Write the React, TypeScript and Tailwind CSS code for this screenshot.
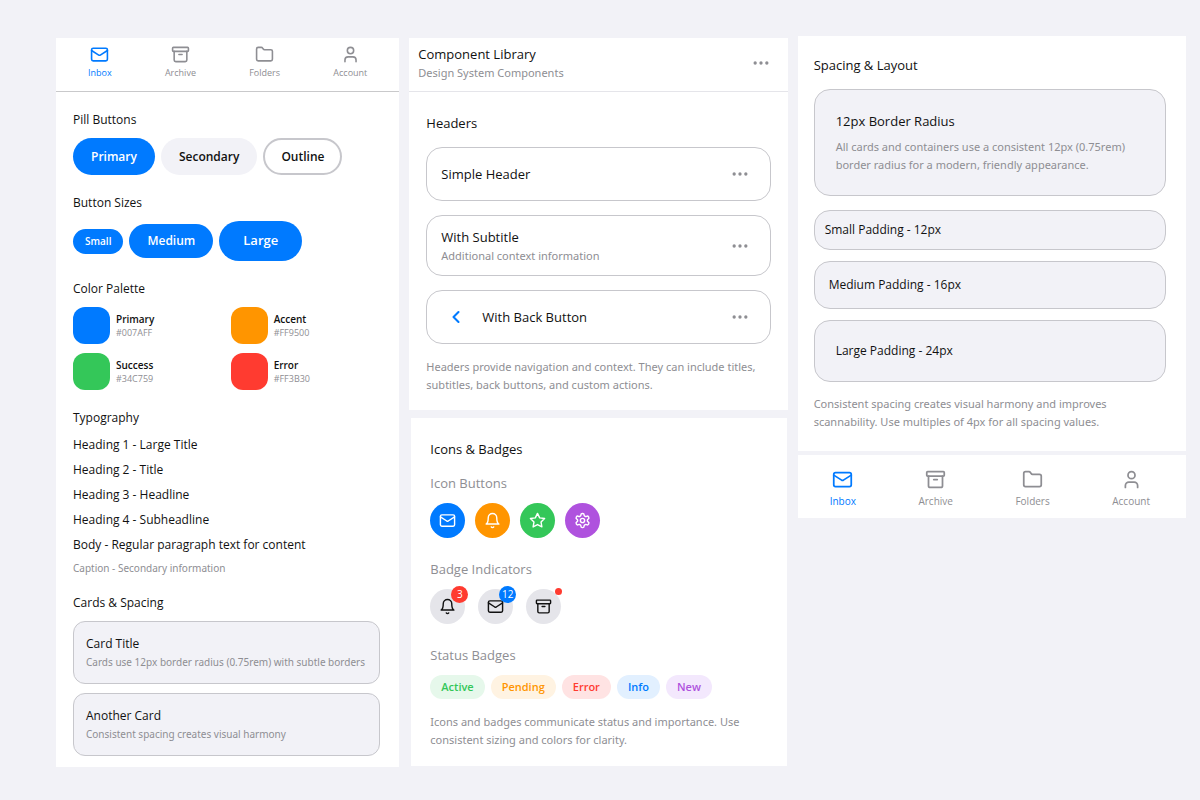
import type { ReactNode } from "react";
import { Archive, ChevronLeft, Folder, Mail, MoreHorizontal, User } from "lucide-react";

type IconProps = { className?: string };

function Stroke({ className, children }: { className?: string; children: ReactNode }) {
  return (
    <svg
      className={className}
      viewBox="0 0 24 24"
      fill="none"
      stroke="currentColor"
      strokeWidth={2}
      strokeLinecap="round"
      strokeLinejoin="round"
      aria-hidden="true"
    >
      {children}
    </svg>
  );
}

function Bell({ className }: IconProps) {
  return (
    <Stroke className={className}>
      <path d="M6 8a6 6 0 0 1 12 0c0 7 3 9 3 9H3s3-2 3-9" />
      <path d="M10.3 21a1.94 1.94 0 0 0 3.4 0" />
    </Stroke>
  );
}

function Star({ className }: IconProps) {
  return (
    <Stroke className={className}>
      <polygon points="12 2 15.09 8.26 22 9.27 17 14.14 18.18 21.02 12 17.77 5.82 21.02 7 14.14 2 9.27 8.91 8.26 12 2" />
    </Stroke>
  );
}

function Gear({ className }: IconProps) {
  return (
    <Stroke className={className}>
      <path d="M12.22 2h-.44a2 2 0 0 0-2 2v.18a2 2 0 0 1-1 1.73l-.43.25a2 2 0 0 1-2 0l-.15-.08a2 2 0 0 0-2.73.73l-.22.38a2 2 0 0 0 .73 2.73l.15.1a2 2 0 0 1 1 1.72v.51a2 2 0 0 1-1 1.74l-.15.09a2 2 0 0 0-.73 2.73l.22.38a2 2 0 0 0 2.73.73l.15-.08a2 2 0 0 1 2 0l.43.25a2 2 0 0 1 1 1.73V20a2 2 0 0 0 2 2h.44a2 2 0 0 0 2-2v-.18a2 2 0 0 1 1-1.73l.43-.25a2 2 0 0 1 2 0l.15.08a2 2 0 0 0 2.73-.73l.22-.39a2 2 0 0 0-.73-2.73l-.15-.08a2 2 0 0 1-1-1.74v-.5a2 2 0 0 1 1-1.74l.15-.09a2 2 0 0 0 .73-2.73l-.22-.38a2 2 0 0 0-2.73-.73l-.15.08a2 2 0 0 1-2 0l-.43-.25a2 2 0 0 1-1-1.73V4a2 2 0 0 0-2-2z" />
      <circle cx="12" cy="12" r="3" />
    </Stroke>
  );
}

const tabs = [
  { label: "Inbox", Icon: Mail },
  { label: "Archive", Icon: Archive },
  { label: "Folders", Icon: Folder },
  { label: "Account", Icon: User },
];

function TabBar({ large = false }: { large?: boolean }) {
  return (
    <nav
      className={
        large
          ? "flex justify-between bg-white pt-3.5 pr-9 pb-[9px] pl-8"
          : "flex justify-between border-b border-[#c9c9cb] bg-white px-8 pt-[7px] pb-[11px]"
      }
    >
      {tabs.map(({ label, Icon }, i) => (
        <a
          key={label}
          href="#"
          className={`flex flex-col items-center ${large ? "gap-[3px] text-[10px] leading-4" : "gap-0.5 text-[9px] leading-3.5"} ${i === 0 ? "text-[#007aff]" : "text-[#8e8e93]"}`}
        >
          <Icon className={large ? "size-[21px]" : "size-[19px]"} strokeWidth={2} />
          {label}
        </a>
      ))}
    </nav>
  );
}

function Label({ children }: { children: ReactNode }) {
  return <h2 className="text-xs leading-4">{children}</h2>;
}

const pill = "rounded-full font-semibold";
const caption = "font-['Noto_Sans','Open_Sans',sans-serif] text-[10px] text-[#8e8e93]";
const note = "font-['Noto_Sans','Open_Sans',sans-serif] text-[11px] leading-4.5 text-[#8e8e93]";
const title = "text-[13px] leading-5";

const palette = [
  { name: "Primary", hex: "#007AFF", bg: "bg-[#007aff]" },
  { name: "Accent", hex: "#FF9500", bg: "bg-[#ff9500]" },
  { name: "Success", hex: "#34C759", bg: "bg-[#34c759]" },
  { name: "Error", hex: "#FF3B30", bg: "bg-[#ff3b30]" },
];

const smallCard = "rounded-xl border border-[#c7c7cc] bg-[#f2f2f7] p-3";

function Foundations() {
  return (
    <section className="bg-white pb-[11px]">
      <TabBar />
      <div className="pt-5 pr-[19px] pl-[17px]">
        <Label>Pill Buttons</Label>
        <div className="mt-2.5 flex gap-1.5">
          <button className={`${pill} h-[37px] bg-[#007aff] px-4.5 text-xs text-white`}>Primary</button>
          <button className={`${pill} h-[37px] bg-[#f2f2f7] px-4.5 text-xs`}>Secondary</button>
          <button className={`${pill} h-[37px] border-2 border-[#c7c7cc] px-4 text-xs`}>Outline</button>
        </div>

        <div className="mt-5">
          <Label>Button Sizes</Label>
        </div>
        <div className="mt-2.5 flex items-center gap-1.5 text-white">
          <button className={`${pill} h-[25px] bg-[#007aff] px-3 text-[10px]`}>Small</button>
          <button className={`${pill} h-[34px] bg-[#007aff] px-4.5 text-xs`}>Medium</button>
          <button className={`${pill} h-10 bg-[#007aff] px-6 text-[13px]`}>Large</button>
        </div>

        <div className="mt-5">
          <Label>Color Palette</Label>
        </div>
        <div className="mt-2.5 grid grid-cols-2 gap-x-2 gap-y-[9px]">
          {palette.map((c) => (
            <div key={c.name} className="flex items-center gap-1.5">
              <div className={`size-[37px] rounded-xl ${c.bg}`} />
              <div>
                <p className="text-[10px] leading-3.5 font-semibold">{c.name}</p>
                <p className="text-[9px] leading-3.5 text-[#8e8e93]">{c.hex}</p>
              </div>
            </div>
          ))}
        </div>

        <div className="mt-5">
          <Label>Typography</Label>
        </div>
        <div className="mt-2.5 flex flex-col gap-2 text-xs leading-[17px]">
          <p>Heading 1 - Large Title</p>
          <p>Heading 2 - Title</p>
          <p>Heading 3 - Headline</p>
          <p>Heading 4 - Subheadline</p>
          <p>Body - Regular paragraph text for content</p>
          <p className={`${caption} leading-3.5`}>Caption - Secondary information</p>
        </div>

        <div className="mt-5">
          <Label>Cards &amp; Spacing</Label>
        </div>
        <div className="mt-2.5 flex flex-col gap-[9px]">
          <article className={smallCard}>
            <h3 className="text-xs leading-5">Card Title</h3>
            <p className={`${caption} leading-[17px]`}>Cards use 12px border radius (0.75rem) with subtle borders</p>
          </article>
          <article className={smallCard}>
            <h3 className="text-xs leading-5">Another Card</h3>
            <p className={`${caption} leading-[17px]`}>Consistent spacing creates visual harmony</p>
          </article>
        </div>
      </div>
    </section>
  );
}

function More() {
  return (
    <button aria-label="More options" className="text-[#8e8e93]">
      <MoreHorizontal className="size-5" fill="currentColor" />
    </button>
  );
}

const headerCard = "flex items-center justify-between rounded-2xl border border-[#c7c7cc] pr-5 pl-3.5";

function Headers() {
  return (
    <section className="bg-white pb-4">
      <header className="flex items-center justify-between border-b border-[#e5e5ea] pt-1.5 pr-[17px] pb-[9px] pl-[9px]">
        <div>
          <h1 className={title}>Component Library</h1>
          <p className={note}>Design System Components</p>
        </div>
        <More />
      </header>
      <div className="px-[17px] pt-[21px]">
        <h2 className={title}>Headers</h2>
        <div className="mt-3.5 flex flex-col gap-3.5">
          <div className={`${headerCard} h-[54px]`}>
            <h3 className={title}>Simple Header</h3>
            <More />
          </div>
          <div className={`${headerCard} h-[61px]`}>
            <div>
              <h3 className={title}>With Subtitle</h3>
              <p className={note}>Additional context information</p>
            </div>
            <More />
          </div>
          <div className={`${headerCard} h-[54px]`}>
            <div className="flex items-center gap-4 pl-[5px]">
              <button aria-label="Back" className="text-[#007aff]">
                <ChevronLeft className="size-5" strokeWidth={2.5} />
              </button>
              <h3 className={title}>With Back Button</h3>
            </div>
            <More />
          </div>
        </div>
        <p className={`${note} mt-3.5`}>
          Headers provide navigation and context. They can include titles, subtitles, back buttons, and custom actions.
        </p>
      </div>
    </section>
  );
}

const iconButtons = [
  { label: "Mail", Icon: Mail, bg: "bg-[#007aff]" },
  { label: "Notifications", Icon: Bell, bg: "bg-[#ff9500]" },
  { label: "Favorite", Icon: Star, bg: "bg-[#34c759]" },
  { label: "Settings", Icon: Gear, bg: "bg-[#af52de]" },
];

const statuses = [
  { label: "Active", tone: "bg-[#e6f8eb] text-[#34c759]" },
  { label: "Pending", tone: "bg-[#fff3e2] text-[#ff9500]" },
  { label: "Error", tone: "bg-[#ffe3e3] text-[#ff3b30]" },
  { label: "Info", tone: "bg-[#e2f0ff] text-[#007aff]" },
  { label: "New", tone: "bg-[#f3e8fd] text-[#af52de]" },
];

const disc = "relative flex size-[35px] items-center justify-center rounded-full";
const counter =
  "absolute -top-[3px] -right-[3px] flex size-[17px] items-center justify-center rounded-full text-[10px] text-white";
const subheading = "text-[13px] leading-5 text-[#8e8e93]";

function IconsAndBadges() {
  return (
    <section className="mr-px ml-0.5 bg-white px-[19px] pt-[21px] pb-[17px]">
      <h2 className={title}>Icons &amp; Badges</h2>
      <h3 className={`${subheading} mt-3.5`}>Icon Buttons</h3>
      <div className="mt-2.5 flex gap-2.5">
        {iconButtons.map(({ label, Icon, bg }) => (
          <button key={label} aria-label={label} className={`${disc} text-white ${bg}`}>
            <Icon className="size-[17px]" />
          </button>
        ))}
      </div>

      <h3 className={`${subheading} mt-[21px]`}>Badge Indicators</h3>
      <div className="mt-2.5 flex gap-[13px]">
        <div className={`${disc} bg-[#e5e5ea]`}>
          <Bell className="size-[17px]" />
          <span className={`${counter} bg-[#ff3b30]`}>3</span>
        </div>
        <div className={`${disc} bg-[#e5e5ea]`}>
          <Mail className="size-[17px]" />
          <span className={`${counter} bg-[#007aff]`}>12</span>
        </div>
        <div className={`${disc} bg-[#e5e5ea]`}>
          <Archive className="size-[17px]" />
          <span className="absolute -top-px -right-px size-[7px] rounded-full bg-[#ff3b30]" />
        </div>
      </div>

      <h3 className={`${subheading} mt-[21px]`}>Status Badges</h3>
      <div className="mt-2.5 flex gap-1.5">
        {statuses.map((s) => (
          <span key={s.label} className={`rounded-full px-[11px] text-[11px] leading-6 font-semibold ${s.tone}`}>
            {s.label}
          </span>
        ))}
      </div>
      <p className={`${note} mt-3.5`}>
        Icons and badges communicate status and importance. Use consistent sizing and colors for clarity.
      </p>
    </section>
  );
}

const box = "rounded-2xl border border-[#c7c7cc] bg-[#f2f2f7] text-xs leading-4.5";

function Spacing() {
  return (
    <section className="bg-white pt-[19px] pr-5 pb-5 pl-4">
      <h2 className={title}>Spacing &amp; Layout</h2>
      <article className="mt-3.5 rounded-2xl border border-[#c7c7cc] bg-[#f2f2f7] p-[21px]">
        <h3 className={title}>12px Border Radius</h3>
        <p className={`${note} mt-[7px]`}>
          All cards and containers use a consistent 12px (0.75rem) border radius for a modern, friendly appearance.
        </p>
      </article>
      <div className="mt-3.5 flex flex-col gap-[11px]">
        <div className={`${box} p-2.5`}>Small Padding - 12px</div>
        <div className={`${box} p-3.5`}>Medium Padding - 16px</div>
        <div className={`${box} p-[21px]`}>Large Padding - 24px</div>
      </div>
      <p className={`${note} mt-[13px]`}>
        Consistent spacing creates visual harmony and improves scannability. Use multiples of 4px for all spacing values.
      </p>
    </section>
  );
}

export default function App() {
  return (
    <main className="grid min-h-screen grid-cols-[343fr_378fr_388fr] items-start gap-2.5 bg-[#f2f2f7] pt-9 pr-3.5 pl-14 font-['Open_Sans','Noto_Sans',sans-serif] text-[#111111]">
      <div className="pt-0.5">
        <Foundations />
      </div>
      <div className="flex flex-col gap-2 pt-0.5">
        <Headers />
        <IconsAndBadges />
      </div>
      <div className="flex flex-col gap-1">
        <Spacing />
        <TabBar large />
      </div>
    </main>
  );
}
